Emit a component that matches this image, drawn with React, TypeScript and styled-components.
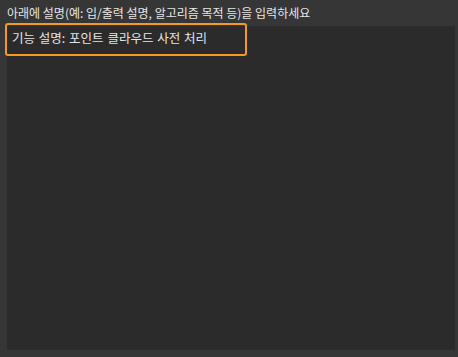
import React from 'react';
import styled, { createGlobalStyle } from 'styled-components';

const GlobalStyle = createGlobalStyle`
  html, body {
    margin: 0;
    padding: 0;
    background: #363636;
  }
`;

const Panel = styled.div`
  width: 458px;
  height: 357px;
  box-sizing: border-box;
  padding: 4px 3px 7px 7px;
  display: flex;
  flex-direction: column;
  background: #363636;
  font-family: 'Noto Sans CJK KR', 'Noto Sans', sans-serif;
  color: #e6e6e6;
`;

const Label = styled.div`
  font-size: 12px;
  line-height: 18px;
  height: 22px;
  white-space: nowrap;
`;

const Editor = styled.div`
  position: relative;
  flex: 1;
  background: #2b2b2b;
  padding: 4px 5px;
`;

const Line = styled.div`
  font-size: 12.5px;
  line-height: 16px;
  word-spacing: 1px;
  white-space: nowrap;
`;

const FocusRing = styled.div`
  position: absolute;
  left: -2px;
  top: -3px;
  width: 238px;
  height: 29px;
  border: 2px solid #f29b22;
  border-radius: 3px;
  pointer-events: none;
`;

function App() {
  return (
    <>
      <GlobalStyle />
      <Panel>
        <Label>아래에 설명(예: 입/출력 설명, 알고리즘 목적 등)을 입력하세요</Label>
        <Editor>
          <FocusRing />
          <Line>기능 설명: 포인트 클라우드 사전 처리</Line>
        </Editor>
      </Panel>
    </>
  );
}

export default App;
